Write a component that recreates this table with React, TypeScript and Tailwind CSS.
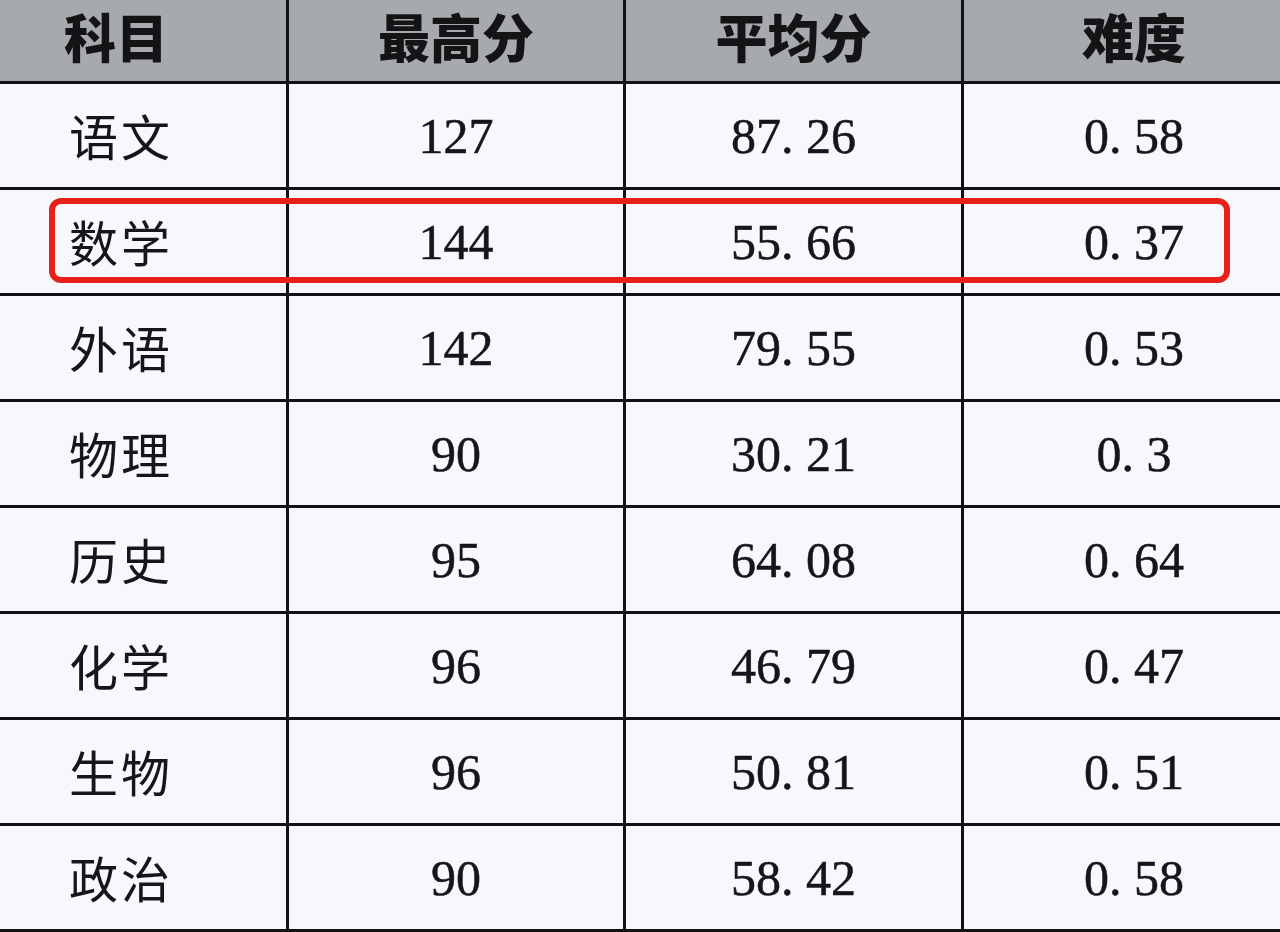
import React from "react";

const rows: [string, string, string, string][] = [
  ["语文", "127", "87.26", "0.58"],
  ["数学", "144", "55.66", "0.37"],
  ["外语", "142", "79.55", "0.53"],
  ["物理", "90", "30.21", "0.3"],
  ["历史", "95", "64.08", "0.64"],
  ["化学", "96", "46.79", "0.47"],
  ["生物", "96", "50.81", "0.51"],
  ["政治", "90", "58.42", "0.58"],
];

const cjk = { fontFamily: '"Noto Sans CJK SC", "Noto Sans", sans-serif' };
const serif = { fontFamily: '"Liberation Serif", "DejaVu Serif", serif' };

function Num({ v }: { v: string }) {
  const i = v.indexOf(".");
  if (i < 0) return <span>{v}</span>;
  return (
    <span>
      {v.slice(0, i)}
      <span className="inline-block w-[0.5em] text-left">.</span>
      {v.slice(i + 1)}
    </span>
  );
}

export default function App() {
  const headers = ["科目", "最高分", "平均分", "难度"];
  return (
    <div className="relative w-[1280px] h-[932px] overflow-hidden bg-[#111214]">
      <div className="grid grid-cols-[286px_334px_335px_340px] auto-rows-[103px] grid-rows-[81px] gap-[3px] w-[1304px]">
        {headers.map((h, i) => (
          <div
            key={h}
            style={cjk}
            className={`bg-[#a7aaac] h-[81px] flex items-start pt-[2px] text-[52px] font-black leading-[1.3] text-[#141416] ${
              i === 0 ? "justify-start pl-[64px]" : "justify-center"
            }`}
          >
            {h}
          </div>
        ))}
        {rows.map((r) => (
          <React.Fragment key={r[0]}>
            <div
              style={cjk}
              className="bg-[#f7f8fb] flex items-center pl-[69px] text-[49px] leading-[1.2] tracking-[3px] text-[#16161a]"
            >
              {r[0]}
            </div>
            {r.slice(1).map((v, j) => (
              <div
                key={j}
                style={serif}
                className="bg-[#f7f8fb] flex items-center justify-center text-[50px] leading-[1.2] text-[#16161a] [-webkit-text-stroke:0.5px_#16161a]"
              >
                <Num v={v} />
              </div>
            ))}
          </React.Fragment>
        ))}
      </div>
      <div className="absolute left-[49px] top-[198px] w-[1181px] h-[85px] rounded-[12px] border-[6px] border-[#e6211c] pointer-events-none" />
    </div>
  );
}
